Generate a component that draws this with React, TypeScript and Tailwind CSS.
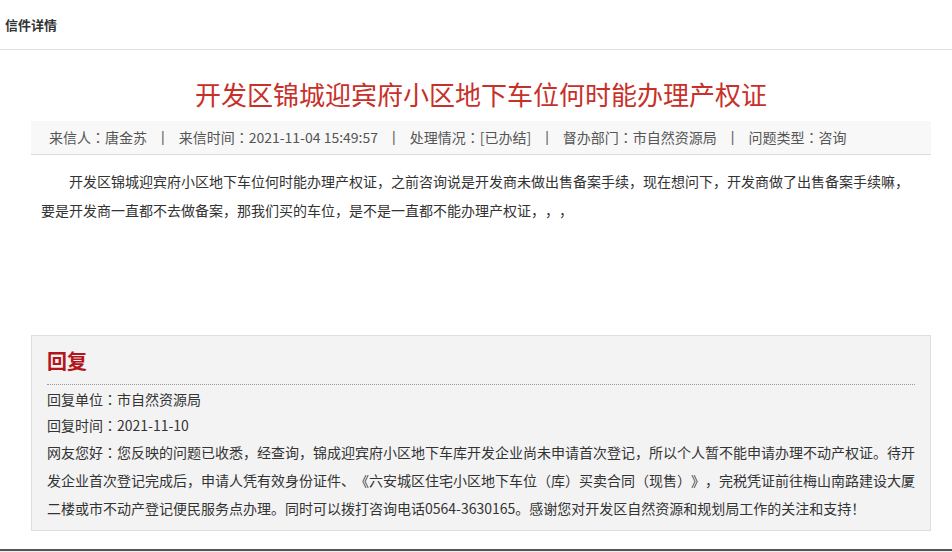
const font = {
  fontFamily: '"Noto Sans CJK SC", "Liberation Sans", sans-serif',
};

const meta = [
  ["来信人", "唐金苏"],
  ["来信时间", "2021-11-04 15:49:57"],
  ["处理情况", "[已办结]"],
  ["督办部门", "市自然资源局"],
  ["问题类型", "咨询"],
];

// centred full-width colon, as the reference's font draws it
function Colon() {
  return <span className="font-['Noto_Sans_CJK_TC',sans-serif]">：</span>;
}

export default function App() {
  return (
    <div
      className="relative h-[552px] w-[952px] overflow-hidden bg-white text-[#333] [text-spacing-trim:space-all]"
      style={font}
    >
      <div className="flex h-[50px] items-center border-b border-[#e2e2e2] pl-[5px] text-[13px] font-bold text-[#333]">
        信件详情
      </div>

      <div className="ml-[31px] w-[900px]">
        <h1 className="mt-[24px] text-center text-[26px] leading-[40px] text-[#c8302a]">
          开发区锦城迎宾府小区地下车位何时能办理产权证
        </h1>

        <div className="mt-[7px] flex h-[34px] items-center border-b border-[#dcdcdc] bg-[#f8f8f8] pl-[18px] text-[14px] text-[#555]">
          {meta.map(([label, value], i) => (
            <span key={label} className="flex items-center">
              {i > 0 && (
                <span className="px-[14px] font-['Liberation_Sans',sans-serif] text-[#666]">|</span>
              )}
              {label}
              <Colon />
              {value}
            </span>
          ))}
        </div>

        <p className="mt-[12px] px-[10px] indent-[28px] text-[14px] leading-[29px] text-[#333]">
          开发区锦城迎宾府小区地下车位何时能办理产权证，之前咨询说是开发商未做出售备案手续，现在想问下，开发商做了出售备案手续嘛，要是开发商一直都不去做备案，那我们买的车位，是不是一直都不能办理产权证，，，
        </p>

        <div className="mt-[110px] border border-[#dedede] bg-[#f3f3f3] px-[15px] pb-[8px] pt-[10px]">
          <div className="text-[20px] font-bold leading-[30px] text-[#b3151b]">回复</div>
          <div className="mt-[8px] border-t border-dotted border-[#999]" />
          <div className="mt-[1px] text-[14px] leading-[26px] text-[#333]">
            <div>
              回复单位<Colon />市自然资源局
            </div>
            <div>
              回复时间<Colon />2021-11-10
            </div>
            <p className="leading-[28px]">
              网友您好<Colon />
              您反映的问题已收悉，经查询，锦成迎宾府小区地下车库开发企业尚未申请首次登记，所以个人暂不能申请办理不动产权证。待开发企业首次登记完成后，申请人凭有效身份证件、《六安城区住宅小区地下车位（库）买卖合同（现售）》，完税凭证前往梅山南路建设大厦二楼或市不动产登记便民服务点办理。同时可以拨打咨询电话0564-3630165。感谢您对开发区自然资源和规划局工作的关注和支持！
            </p>
          </div>
        </div>
      </div>

      <div className="absolute left-0 top-[549px] h-[3px] w-full border-t-2 border-[#555] bg-[#eee]" />
    </div>
  );
}
